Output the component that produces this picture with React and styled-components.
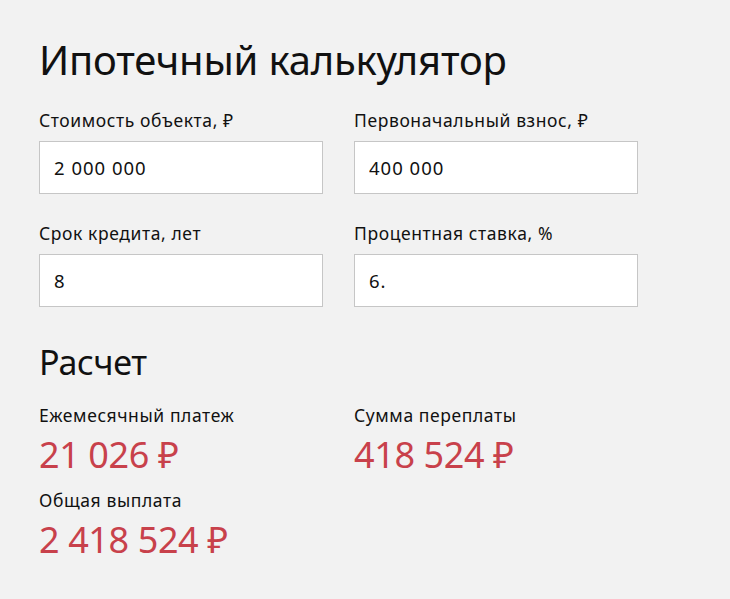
import React from "react";
import styled, { createGlobalStyle } from "styled-components";

const Global = createGlobalStyle`
  html, body { margin: 0; padding: 0; background: #f2f2f2; }
  body { font-family: "Noto Sans", "Open Sans", sans-serif; color: #111; }
`;

const Page = styled.div`
  padding: 32px 39px 0;
  width: 730px;
  height: 599px;
  box-sizing: border-box;
`;

const Title = styled.h1`
  margin: 0;
  font-size: 40px;
  font-weight: 400;
  line-height: 56px;
  letter-spacing: -0.2px;
`;

const Grid = styled.div`
  display: grid;
  grid-template-columns: 284px 284px;
  column-gap: 31px;
  row-gap: ${(p) => p.$rowGap || 0}px;
`;

const Field = styled.label`
  display: flex;
  flex-direction: column;
`;

const Label = styled.span`
  font-size: 17.5px;
  line-height: 22px;
  margin: ${(p) => p.$mt || 0}px 0 ${(p) => p.$mb || 0}px;
  letter-spacing: 0.6px;
`;

const Input = styled.input`
  box-sizing: border-box;
  height: 53px;
  border: 1px solid #c6c6c6;
  background: #fff;
  font-family: inherit;
  font-size: 18.5px;
  padding: 0 14px;
  color: #111;
  outline: none;
  letter-spacing: 1px;
`;

const SubTitle = styled.h2`
  margin: 35px 0 22px;
  font-size: 34px;
  font-weight: 400;
  line-height: 40px;
  letter-spacing: -0.3px;
`;

const Value = styled.div`
  color: #c8414b;
  font-size: 36px;
  line-height: 44px;
  letter-spacing: -0.4px;
`;

const Result = styled.div`
  display: flex;
  flex-direction: column;
`;

const fields = [
  ["Стоимость объекта, ₽", "2 000 000"],
  ["Первоначальный взнос, ₽", "400 000"],
  ["Срок кредита, лет", "8"],
  ["Процентная ставка, %", "6."],
];

const results = [
  ["Ежемесячный платеж", "21 026 ₽"],
  ["Сумма переплаты", "418 524 ₽"],
  ["Общая выплата", "2 418 524 ₽"],
];

export default function App() {
  return (
    <Page>
      <Global />
      <Title>Ипотечный калькулятор</Title>
      <Grid $rowGap={0}>
        {fields.map(([l, v], i) => (
          <Field key={l}>
            <Label $mt={i >= 2 ? 28 : 21} $mb={10}>{l}</Label>
            <Input defaultValue={v} />
          </Field>
        ))}
      </Grid>
      <SubTitle>Расчет</SubTitle>
      <Grid $rowGap={12}>
        {results.map(([l, v]) => (
          <Result key={l}>
            <Label $mb={7}>{l}</Label>
            <Value>{v}</Value>
          </Result>
        ))}
      </Grid>
    </Page>
  );
}
